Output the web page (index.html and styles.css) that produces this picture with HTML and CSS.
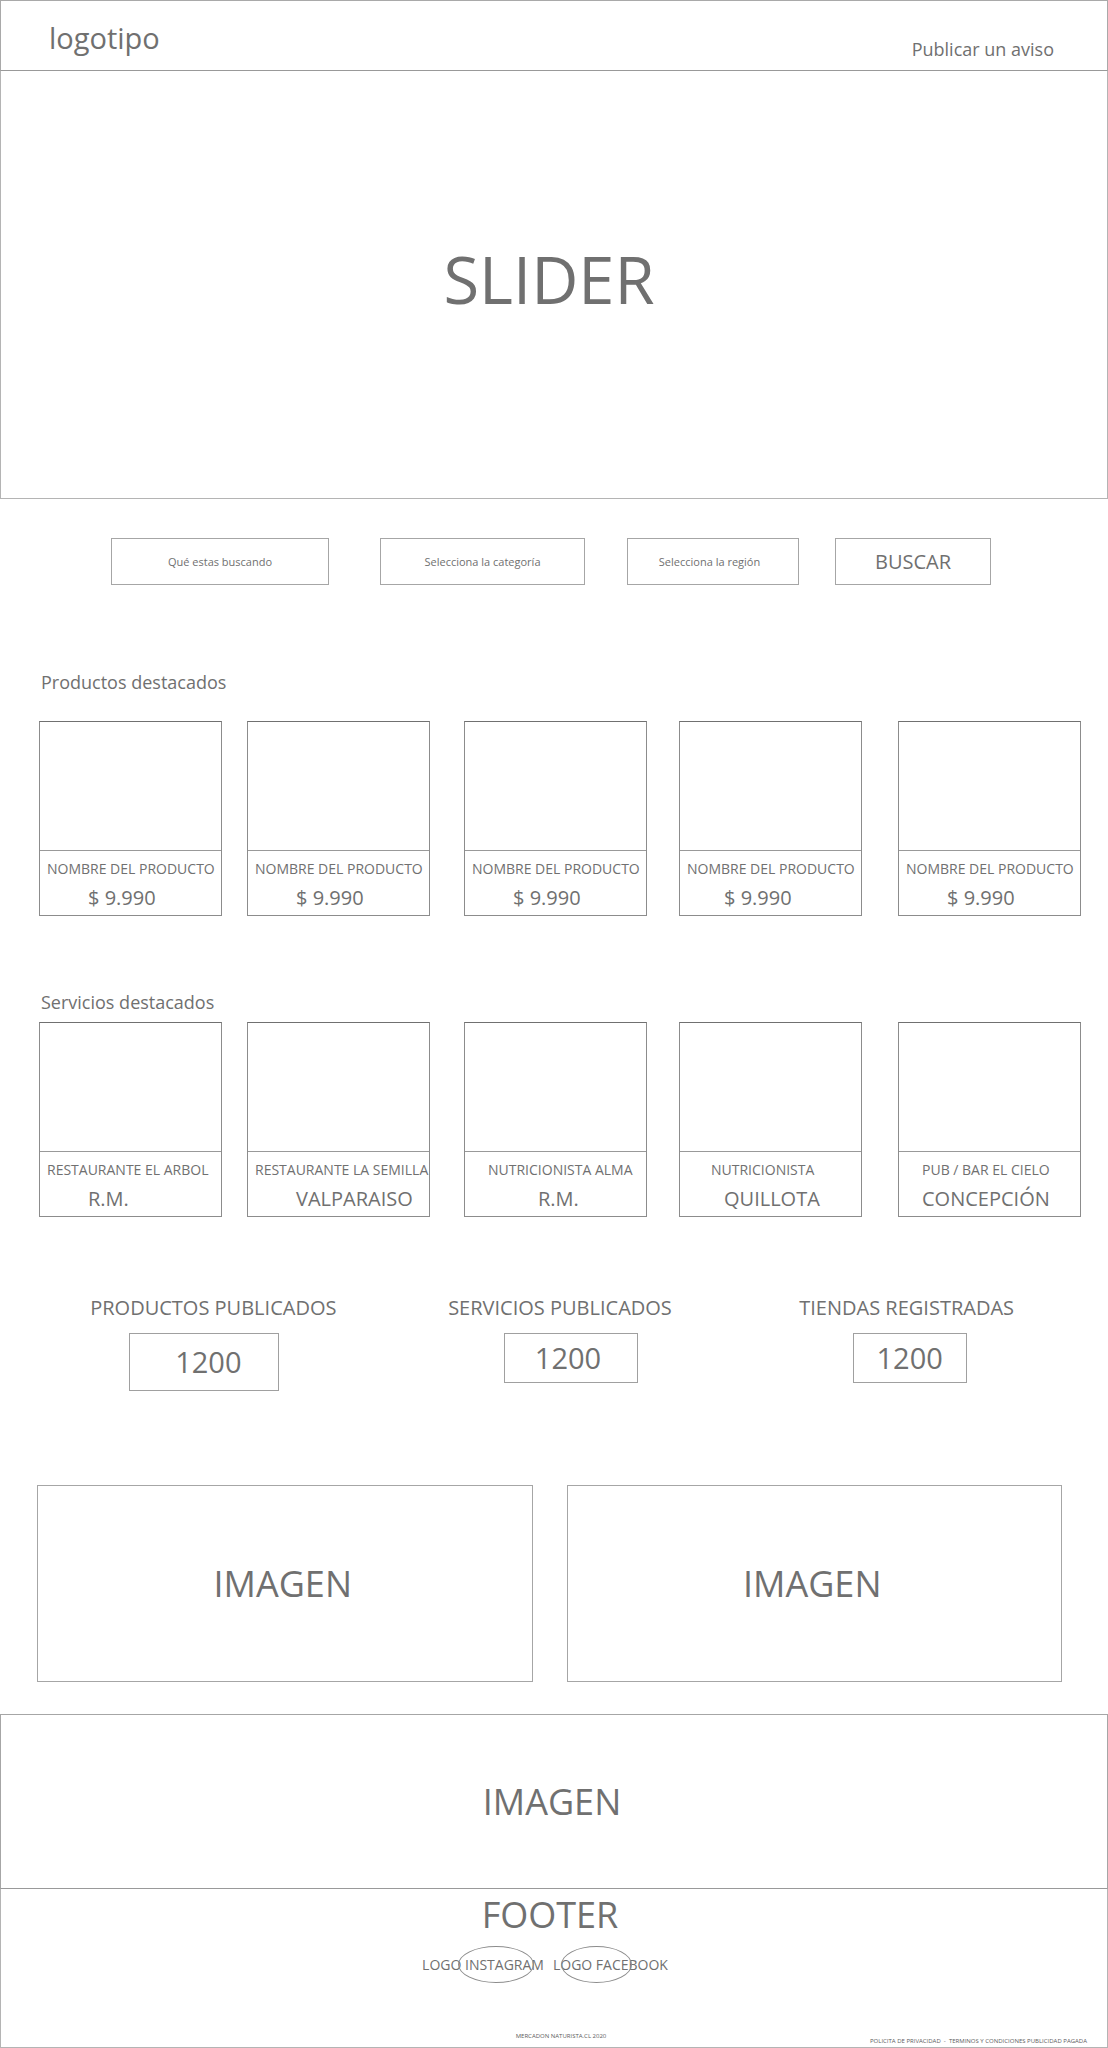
FILE: index.html
```html
<!DOCTYPE html>
<html lang="es">
<head>
<meta charset="utf-8">
<meta name="viewport" content="width=device-width, initial-scale=1">
<title>Mercado Naturista</title>
<link rel="stylesheet" href="styles.css">
</head>
<body>
<header class="header">
  <a class="logo" href="#">logotipo</a>
  <a class="publish" href="#">Publicar un aviso</a>
</header>
<main>
  <section class="hero"><h1 class="hero-title">SLIDER</h1></section>

  <form class="search">
    <input class="field" type="text" aria-label="Qué estas buscando" placeholder="Qué estas buscando">
    <select class="field" aria-label="Categoría"><option>Selecciona la categoría</option></select>
    <select class="field region" aria-label="Región"><option>Selecciona la región</option></select>
    <button class="field search-button" type="submit">BUSCAR</button>
  </form>

  <section class="featured products">
    <h2 class="section-title">Productos destacados</h2>
    <div class="cards">
      <article class="card"><div class="card-media"></div><h3 class="card-name">NOMBRE DEL PRODUCTO</h3><p class="card-detail">$ 9.990</p></article>
      <article class="card"><div class="card-media"></div><h3 class="card-name">NOMBRE DEL PRODUCTO</h3><p class="card-detail">$ 9.990</p></article>
      <article class="card"><div class="card-media"></div><h3 class="card-name">NOMBRE DEL PRODUCTO</h3><p class="card-detail">$ 9.990</p></article>
      <article class="card"><div class="card-media"></div><h3 class="card-name">NOMBRE DEL PRODUCTO</h3><p class="card-detail">$ 9.990</p></article>
      <article class="card"><div class="card-media"></div><h3 class="card-name">NOMBRE DEL PRODUCTO</h3><p class="card-detail">$ 9.990</p></article>
    </div>
  </section>

  <section class="featured services">
    <h2 class="section-title">Servicios destacados</h2>
    <div class="cards">
      <article class="card"><div class="card-media"></div><h3 class="card-name">RESTAURANTE EL ARBOL</h3><p class="card-detail">R.M.</p></article>
      <article class="card"><div class="card-media"></div><h3 class="card-name">RESTAURANTE LA SEMILLA</h3><p class="card-detail">VALPARAISO</p></article>
      <article class="card card-alma"><div class="card-media"></div><h3 class="card-name">NUTRICIONISTA ALMA</h3><p class="card-detail">R.M.</p></article>
      <article class="card card-quillota"><div class="card-media"></div><h3 class="card-name">NUTRICIONISTA</h3><p class="card-detail">QUILLOTA</p></article>
      <article class="card card-cielo"><div class="card-media"></div><h3 class="card-name">PUB / BAR EL CIELO</h3><p class="card-detail">CONCEPCIÓN</p></article>
    </div>
  </section>

  <section class="stats">
    <div class="stat stat-products"><h2 class="stat-label">PRODUCTOS PUBLICADOS</h2><p class="stat-value">1200</p></div>
    <div class="stat stat-services"><h2 class="stat-label">SERVICIOS PUBLICADOS</h2><p class="stat-value">1200</p></div>
    <div class="stat stat-shops"><h2 class="stat-label">TIENDAS REGISTRADAS</h2><p class="stat-value">1200</p></div>
  </section>

  <section class="gallery">
    <div class="picture">IMAGEN</div>
    <div class="picture">IMAGEN</div>
  </section>

  <section class="banner">IMAGEN</section>
</main>
<footer class="footer">
  <h2 class="footer-title">FOOTER</h2>
  <nav class="social" aria-label="Redes sociales">
    <a class="social-link instagram" href="#">LOGO INSTAGRAM</a>
    <a class="social-link facebook" href="#">LOGO FACEBOOK</a>
  </nav>
  <div class="footer-notes">
    <p class="copyright">MERCADON NATURISTA.CL 2020</p>
    <p class="legal"><a href="#">POLICITA DE PRIVACIDAD</a> &nbsp;-&nbsp; <a href="#">TERMINOS Y CONDICIONES</a> <a href="#">PUBLICIDAD PAGADA</a></p>
  </div>
</footer>
</body>
</html>
```
FILE: styles.css
```css
* {
  box-sizing: border-box;
}

body {
  margin: 0;
  background: #fff;
  color: #707070;
  font-family: "Open Sans", "Noto Sans", sans-serif;
  font-size: 14px;
  line-height: 20px;
}

h1, h2, h3, p {
  margin: 0;
  font-weight: 400;
}

a {
  color: inherit;
  text-decoration: none;
}

.header {
  display: flex;
  justify-content: space-between;
  align-items: flex-start;
  padding: 19px 53px 9px 48px;
  border: 1px solid #a9a9a9;
  border-bottom-color: #999;
}

.logo {
  font-size: 29px;
  line-height: 36px;
}

.publish {
  margin-top: 17px;
  font-size: 18px;
  line-height: 24px;
}

.hero {
  display: flex;
  align-items: center;
  justify-content: center;
  min-height: 428px;
  padding: 0 10px 12px 0;
  border: 1px solid #b4b4b4;
  border-top: 0;
}

.hero-title {
  font-size: 65px;
  line-height: 88px;
}

/* Odd tracks hold the controls, even tracks are the gutters. */
.search {
  display: grid;
  grid-template-columns: 218fr 51fr 205fr 42fr 172fr 36fr 156fr;
  padding: 39px 117px 85px 111px;
}

.field {
  grid-row: 1;
  width: 100%;
  min-width: 0;
  height: 47px;
  margin: 0;
  padding: 0;
  border: 1px solid #a6a6a6;
  border-radius: 0;
  background: #fff;
  color: inherit;
  font-family: inherit;
  font-size: 11px;
  text-align: center;
  text-align-last: center;
  appearance: none;
}

.field:nth-child(1) { grid-column: 1; }
.field:nth-child(2) { grid-column: 3; }
.field:nth-child(3) { grid-column: 5; }
.field:nth-child(4) { grid-column: 7; }

.field::placeholder {
  color: inherit;
  opacity: 1;
}

.region {
  padding-right: 7px;
}

.search-button {
  font-size: 20px;
}

.featured {
  padding: 0 27px 0 39px;
}

.products {
  padding-bottom: 74px;
}

.section-title {
  padding-left: 2px;
  font-size: 18px;
  line-height: 24px;
}

.products .section-title {
  margin-bottom: 27px;
}

.services .section-title {
  margin-bottom: 8px;
}

.cards {
  display: grid;
  grid-template-columns: 183fr 25fr 183fr 34fr 183fr 32fr 183fr 36fr 183fr;
}

.card {
  grid-row: 1;
  min-width: 0;
  padding-bottom: 3px;
  border: 1px solid #8c8c8c;
  border-top-color: #707070;
  white-space: nowrap;
}

.card:nth-child(1) { grid-column: 1; }
.card:nth-child(2) { grid-column: 3; }
.card:nth-child(3) { grid-column: 5; }
.card:nth-child(4) { grid-column: 7; }
.card:nth-child(5) { grid-column: 9; }

.card-media {
  height: 129px;
  border-bottom: 1px solid #999;
}

.card-name {
  padding: 8px 0 0 7px;
  font-size: 14px;
  line-height: 20px;
}

.card-detail {
  padding: 5px 0 0 48px;
  font-size: 20px;
  line-height: 28px;
}

.card:nth-child(4) .card-detail {
  padding-left: 44px;
}

.card-alma .card-name,
.card-cielo .card-name,
.card-cielo .card-detail {
  padding-left: 23px;
}

.card-alma .card-detail {
  padding-left: 73px;
}

.card-quillota .card-name {
  padding-left: 31px;
}

.stats {
  display: grid;
  grid-template-columns: repeat(3, 1fr);
  padding: 77px 28px 94px 40px;
}

.stat {
  display: flex;
  flex-direction: column;
  align-items: center;
}

.stat-label {
  margin-bottom: 11px;
  font-size: 20px;
  line-height: 28px;
}

.stat-value {
  padding: 6px 26px;
  border: 1px solid #a0a0a0;
  font-size: 29px;
  line-height: 36px;
  text-align: center;
}

.stat-products .stat-value {
  width: 150px;
  margin-right: 18px;
  padding: 10px 26px 10px 34px;
}

.stat-services .stat-value {
  width: 134px;
  margin-left: 22px;
  padding-right: 32px;
}

.stat-shops .stat-value {
  width: 114px;
  margin-left: 6px;
  padding-right: 20px;
  padding-left: 20px;
}

.gallery {
  display: grid;
  grid-template-columns: 1fr 1fr;
  gap: 34px;
  padding: 0 46px 32px 37px;
}

.picture,
.banner {
  display: flex;
  align-items: center;
  justify-content: center;
  padding-right: 4px;
  border: 1px solid #a6a6a6;
  font-size: 36px;
  line-height: 48px;
}

.picture {
  min-height: 197px;
}

.banner {
  min-height: 175px;
  border-bottom-color: #999;
}

.footer {
  padding: 2px 20px;
  border: 1px solid #b4b4b4;
  border-top: 0;
}

.footer-title {
  margin-bottom: 16px;
  padding-right: 8px;
  font-size: 36px;
  line-height: 48px;
  text-align: center;
}

.social {
  display: flex;
  justify-content: center;
  gap: 9px;
  padding-right: 18px;
}

.social-link {
  position: relative;
}

/* Oval outline of each logo, drawn behind its label. */
.social-link::before {
  content: "";
  position: absolute;
  top: -9px;
  height: 35px;
  border: 1px solid #8c8c8c;
  border-radius: 50%;
}

.instagram::before {
  left: 36px;
  width: 74px;
}

.facebook::before {
  left: 8px;
  width: 69px;
}

.footer-notes {
  display: grid;
  grid-template-columns: 1fr auto 1fr;
  margin-top: 57px;
  color: #5c5c5c;
  font-size: 6px;
  line-height: 8px;
}

.copyright {
  grid-column: 2;
  padding: 0 0 5px 14px;
}

.legal {
  align-self: end;
  text-align: right;
}
```
